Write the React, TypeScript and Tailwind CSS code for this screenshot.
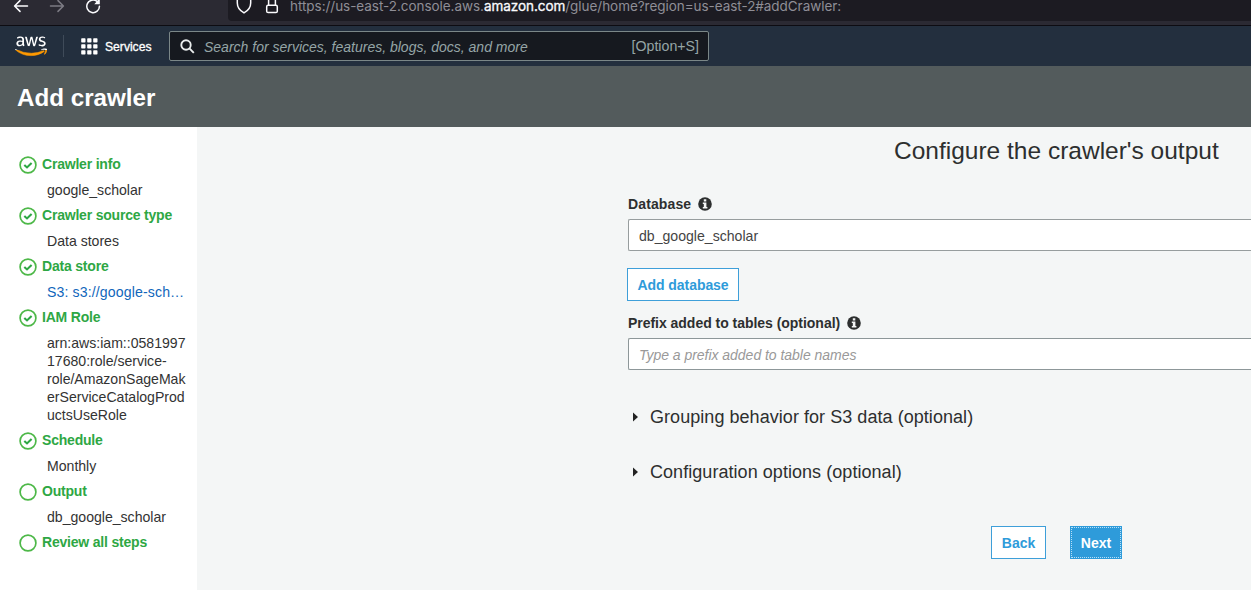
import type { ReactNode } from "react";
import { FaAws } from "react-icons/fa";

type Step = {
  title: string;
  done: boolean;
  lines?: string[];
  link?: boolean;
};

const steps: Step[] = [
  { title: "Crawler info", done: true, lines: ["google_scholar"] },
  { title: "Crawler source type", done: true, lines: ["Data stores"] },
  { title: "Data store", done: true, lines: ["S3: s3://google-sch…"], link: true },
  {
    title: "IAM Role",
    done: true,
    lines: [
      "arn:aws:iam::0581997",
      "17680:role/service-",
      "role/AmazonSageMak",
      "erServiceCatalogProd",
      "uctsUseRole",
    ],
  },
  { title: "Schedule", done: true, lines: ["Monthly"] },
  { title: "Output", done: false, lines: ["db_google_scholar"] },
  { title: "Review all steps", done: false },
];

function BrowserBar() {
  return (
    <div className="flex h-[26px] shrink-0 items-start border-b border-[#0d0c12] bg-[#2b2a33] pl-[13px]">
      <svg width="16" height="14" viewBox="0 0 16 14" fill="none" stroke="#fbfbfe" strokeWidth="1.5" strokeLinecap="round" strokeLinejoin="round">
        <path d="M14.5 6H2M7 0.6L1.6 6L7 11.4" />
      </svg>
      <svg className="ml-[20px]" width="16" height="14" viewBox="0 0 16 14" fill="none" stroke="#7c7b84" strokeWidth="1.5" strokeLinecap="round" strokeLinejoin="round">
        <path d="M1.5 6H14M9 0.6L14.4 6L9 11.4" />
      </svg>
      <svg className="ml-[20px]" width="17" height="15" viewBox="0 0 17 15" fill="none" stroke="#fbfbfe" strokeWidth="1.5" strokeLinecap="round">
        <path d="M14.4 6.2A6.3 6.3 0 1 1 12 1.4" />
        <path d="M9.3 4.2H14.8V-2Z" fill="#fbfbfe" stroke="none" />
      </svg>
      <div className="ml-[126px] flex h-[21px] flex-1 items-start rounded-bl-[4px] bg-[#1c1b22] pl-[8px]">
        <svg width="16" height="14" viewBox="0 0 16 14" fill="none" stroke="#fbfbfe" strokeWidth="1.5" strokeLinejoin="round">
          <path d="M1.3 -2V3C1.3 7.6 3.8 10.6 8 12.9C12.2 10.6 14.7 7.6 14.7 3V-2" />
        </svg>
        <svg className="ml-[13px]" width="14" height="14" viewBox="0 0 14 14" fill="none" stroke="#fbfbfe" strokeWidth="1.5">
          <path d="M3.6 5.2V-1M10.4 5.2V-1" />
          <rect x="1.7" y="5.3" width="10.6" height="7.3" rx="1.4" />
        </svg>
        <div className="ml-[11px] font-[Inter,sans-serif] text-[13.5px] leading-[13px] tracking-[-0.045px] whitespace-nowrap text-[#8f8e96]">
          https://us-east-2.console.aws.<span className="text-[#fbfbfe] [-webkit-text-stroke:0.3px_#fbfbfe]">amazon.com</span>/glue/home?region=us-east-2#addCrawler:
        </div>
      </div>
    </div>
  );
}

function AwsNav() {
  return (
    <div className="flex h-[40px] shrink-0 items-center bg-[#232f3e] pl-[15px]">
      <svg width="0" height="0">
        <linearGradient id="aws-fill" gradientUnits="userSpaceOnUse" x1="0" y1="0" x2="0" y2="512">
          <stop offset="0.645" stopColor="#ffffff" />
          <stop offset="0.645" stopColor="#ff9900" />
        </linearGradient>
        <linearGradient id="aws-edge" gradientUnits="userSpaceOnUse" x1="0" y1="0" x2="0" y2="512">
          <stop offset="0.645" stopColor="#ff9900" stopOpacity="0" />
          <stop offset="0.645" stopColor="#ff9900" />
        </linearGradient>
      </svg>
      <FaAws className="h-[26px] w-[32px] [stroke-width:12px]" fill="url(#aws-fill)" stroke="url(#aws-edge)" />
      <div className="ml-[16px] h-[22px] w-px bg-[#3f4b59]" />
      <svg className="ml-[17px]" width="17" height="17" viewBox="0 0 17 17" fill="#fff">
        {[0, 6, 12].map((y) =>
          [0, 6, 12].map((x) => <rect key={`${x}-${y}`} x={x + 0.2} y={y + 0.2} width="4.3" height="4.3" rx="0.7" />),
        )}
      </svg>
      <div className="ml-[7px] w-[64px] pt-[2px] text-[12.2px] tracking-[-0.03px] text-white [-webkit-text-stroke:0.3px_white]">Services</div>
      <div className="flex h-[30px] w-[540px] items-center rounded-[2px] border border-[#7b8788] bg-[#16191f] pr-[9px] pl-[10px]">
        <svg width="15" height="15" viewBox="0 0 15 15" fill="none" stroke="#eaeded" strokeWidth="1.9">
          <circle cx="6" cy="6" r="4.7" />
          <path d="M9.4 9.4L13.8 13.8" />
        </svg>
        <div className="ml-[9px] flex-1 pt-[3px] text-[14px] text-[#95a5a6] italic">Search for services, features, blogs, docs, and more</div>
        <div className="pt-[2px] text-[14.2px] text-[#95a5a6]">[Option+S]</div>
      </div>
    </div>
  );
}

function StepIcon({ done }: { done: boolean }) {
  return (
    <svg className="mt-[2px] shrink-0" width="18" height="18" viewBox="0 0 18 18" fill="none">
      <circle cx="9" cy="9" r="7.9" stroke="#4db848" strokeWidth="1.7" />
      {done && <path d="M5.3 8.9L8 11.4L12.6 6.9" stroke="#2ea744" strokeWidth="2.1" />}
    </svg>
  );
}

function Sidebar() {
  return (
    <div className="w-[197px] shrink-0 bg-white pt-[24px] pl-[19px] text-[14.1px] leading-[18px]">
      {steps.map((step) => (
        <div key={step.title}>
          <div className="flex h-[25.5px] items-center gap-[5px]">
            <StepIcon done={step.done} />
            <div className="pt-px text-[14px] font-bold tracking-[-0.2px] whitespace-nowrap text-[#2ea744]">{step.title}</div>
          </div>
          {step.lines && (
            <div className={`pt-[4px] pb-[3.5px] pl-[28px] whitespace-nowrap ${step.link ? "tracking-[0.13px] text-[#1166bb]" : "tracking-[-0.01px] text-[#333]"}`}>
              {step.lines.map((line) => (
                <div key={line}>{line}</div>
              ))}
            </div>
          )}
        </div>
      ))}
    </div>
  );
}

function InfoIcon() {
  return (
    <svg width="14" height="14" viewBox="0 0 14 14">
      <circle cx="7" cy="7" r="6.8" fill="#2d2f2f" />
      <path d="M5.8 2.3H8.3V4.4H5.8ZM4.8 5.5H8.4V9.9H9.4V11.5H4.8V9.9H5.8V7H4.8Z" fill="#f4f6f6" />
    </svg>
  );
}

function FieldLabel({ children }: { children: ReactNode }) {
  return (
    <div className="flex h-[18px] items-center gap-[7px] text-[14px] font-bold tracking-[-0.03px] text-[#2d2f2f]">
      <span className="pt-px">{children}</span>
      <InfoIcon />
    </div>
  );
}

function Expander({ children }: { children: ReactNode }) {
  return (
    <div className="flex h-[24px] items-center pl-[5px] text-[18px] tracking-[0.05px] text-[#2d2f2f]">
      <svg className="mr-[12px]" width="5" height="10" viewBox="0 0 5 10" fill="#222">
        <path d="M0 0.5L5 5L0 9.5Z" />
      </svg>
      {children}
    </div>
  );
}

function OutputForm() {
  return (
    <div className="min-w-0 flex-1 overflow-hidden bg-[#f4f6f6] text-[#2d2f2f]">
      <div className="pt-[8px] pl-[697px] text-[24.5px] leading-[32px] whitespace-nowrap">Configure the crawler's output</div>
      <div className="pt-[28px] pl-[431px]">
        <div className="tracking-normal">
          <FieldLabel>
            <span className="tracking-[0.12px]">Database</span>
          </FieldLabel>
        </div>
        <div className="mt-[6px] flex h-[32px] items-center rounded-l-[2px] border border-r-0 border-[#979d9e] bg-white pt-[3px] pl-[10px] text-[14.1px] text-[#444]">
          db_google_scholar
        </div>
        <button className="mt-[17px] -ml-px flex h-[33px] w-[112px] items-center justify-center border border-[#3e9fd9] bg-white pt-[2px] text-[14px] font-bold tracking-[-0.05px] whitespace-nowrap text-[#2e9bda]">
          Add database
        </button>
        <div className="mt-[13px]">
          <FieldLabel>Prefix added to tables (optional)</FieldLabel>
        </div>
        <div className="mt-[6px] flex h-[32px] items-center rounded-l-[2px] border border-r-0 border-[#8d9799] bg-white pt-[3px] pl-[10px] text-[14px] tracking-[-0.03px] text-[#999] italic">
          Type a prefix added to table names
        </div>
        <div className="mt-[35px]">
          <Expander>Grouping behavior for S3 data (optional)</Expander>
        </div>
        <div className="mt-[31px]">
          <Expander>Configuration options (optional)</Expander>
        </div>
        <div className="mt-[42px] flex gap-[24px] pl-[363px] text-[14px] font-bold">
          <button className="h-[33px] w-[55px] border border-[#3e9fd9] bg-white pt-[2px] text-[#2e9bda]">Back</button>
          <button className="h-[33px] w-[52px] border border-[#2e9bda] bg-[#2e9bda] pt-[2px] text-white outline-1 -outline-offset-2 outline-dotted outline-[#b8e0f7]">
            Next
          </button>
        </div>
      </div>
    </div>
  );
}

export default function App() {
  return (
    <div className="flex h-[590px] w-[1251px] flex-col overflow-hidden font-['Liberation_Sans',Arial,sans-serif]">
      <BrowserBar />
      <AwsNav />
      <div className="flex h-[61px] shrink-0 items-center bg-[#535b5c] pl-[17px] text-[24.2px] font-bold text-white">
        <div className="pt-[4px]">Add crawler</div>
      </div>
      <div className="flex min-h-0 flex-1">
        <Sidebar />
        <OutputForm />
      </div>
    </div>
  );
}
